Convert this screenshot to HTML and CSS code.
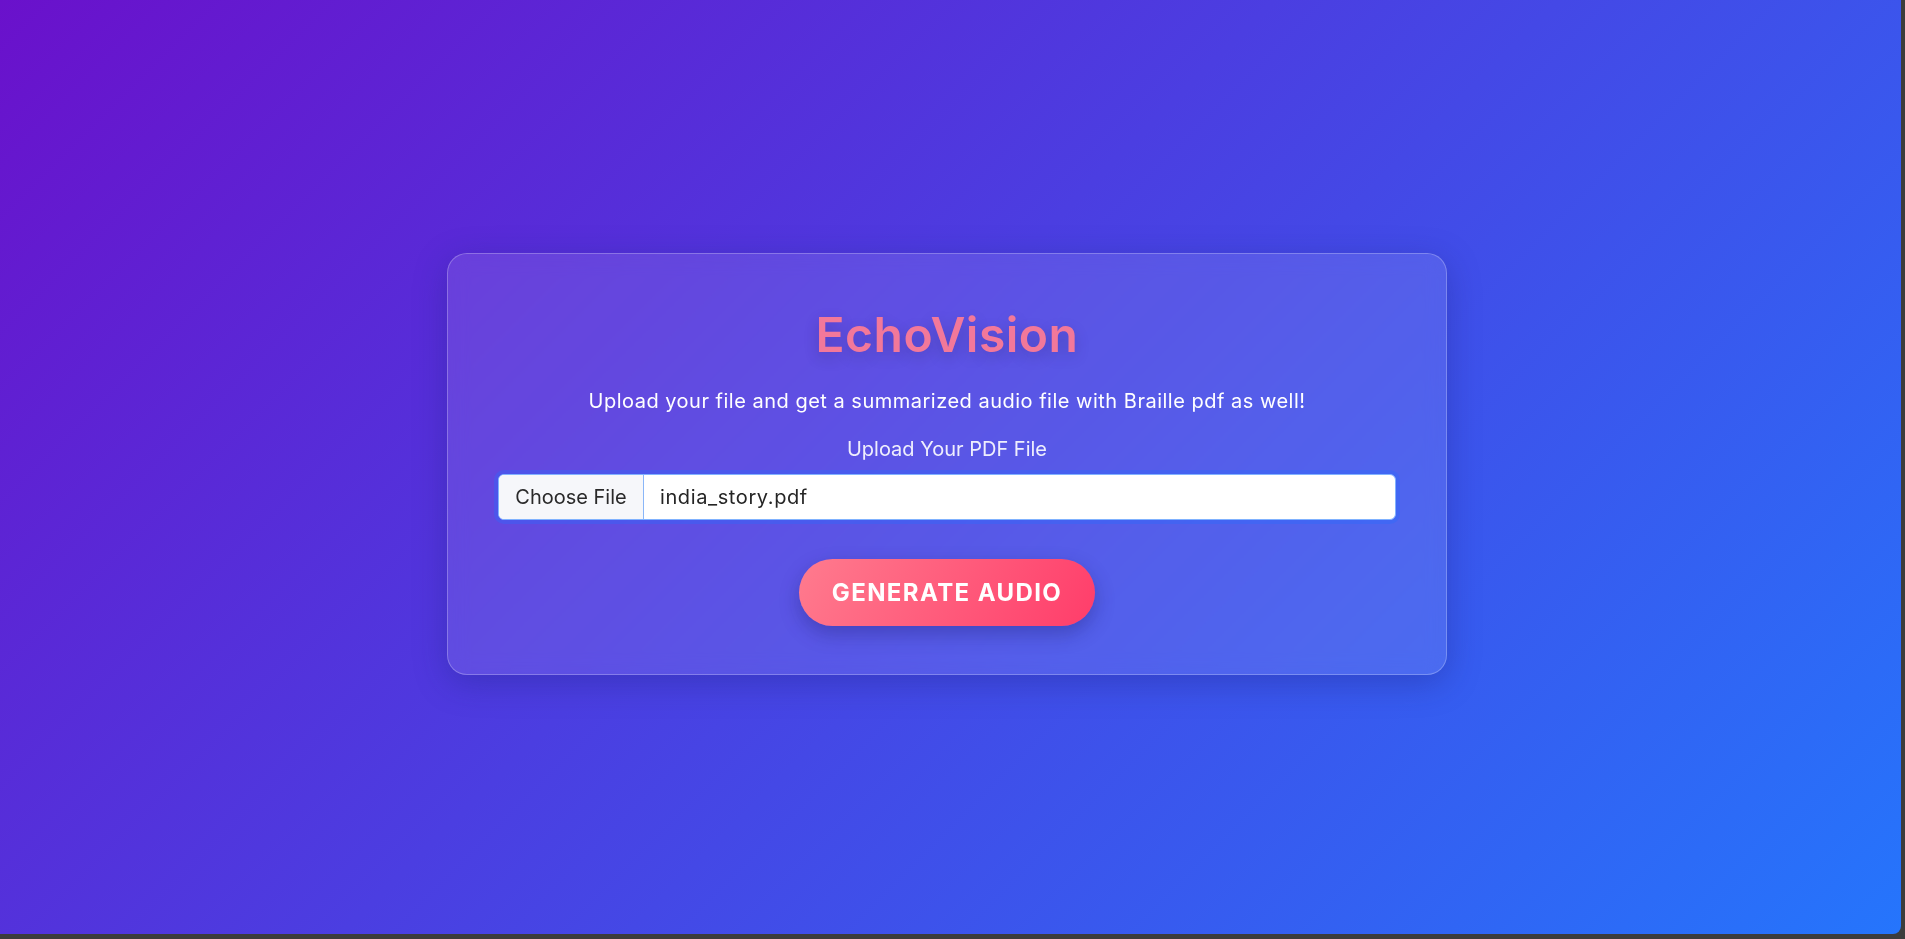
FILE: index.html
```html
<!DOCTYPE html>
<html lang="en">
<head>
<meta charset="utf-8">
<title>EchoVision</title>
<link rel="stylesheet" href="styles.css">
</head>
<body>
<main class="page">
  <section class="card">
    <h1 class="title">EchoVision</h1>
    <p class="subtitle">Upload your file and get a summarized audio file with Braille pdf as well!</p>
    <label class="label" for="pdf">Upload Your PDF File</label>
    <div class="file-input" id="pdf">
      <span class="file-btn">Choose File</span>
      <span class="file-name">india_story.pdf</span>
    </div>
    <button class="generate" type="button">Generate Audio</button>
  </section>
</main>
</body>
</html>
```
FILE: styles.css
```css
html, body {
  margin: 0;
  padding: 0;
  background: #3c3c3c;
  height: 100%;
  overflow: hidden;
}

.page {
  box-sizing: border-box;
  width: calc(100% - 4px);
  height: calc(100% - 5px);
  border-bottom-right-radius: 8px;
  background: linear-gradient(135deg, #6a11cb 0%, #2575fc 100%);
  display: flex;
  align-items: center;
  justify-content: center;
  padding-right: 7px;
  padding-bottom: 6px;
  font-family: "Inter", "Open Sans", "Liberation Sans", sans-serif;
}

.card {
  box-sizing: border-box;
  width: 1000px;
  padding: 52px 50px 48px;
  border-radius: 20px;
  background: rgba(255, 255, 255, 0.1);
  border: 1px solid rgba(255, 255, 255, 0.25);
  box-shadow: 0 8px 32px rgba(31, 38, 135, 0.37);
  backdrop-filter: blur(10px);
  display: flex;
  flex-direction: column;
  align-items: center;
  text-align: center;
}

.title {
  margin: 0 0 22px;
  font-size: 48px;
  line-height: 57.6px;
  font-weight: 600;
  color: #f2789a;
  text-shadow: 0 5px 15px rgba(0, 0, 0, 0.18);
  letter-spacing: 0.5px;
}

.subtitle {
  margin: 0 0 18px;
  font-size: 20px;
  line-height: 30px;
  letter-spacing: 0.5px;
  color: #ffffff;
}

.label {
  margin: 0 0 10px;
  font-size: 20px;
  line-height: 30px;
  color: rgba(255, 255, 255, 0.9);
}

.file-input {
  box-sizing: border-box;
  align-self: stretch;
  height: 46px;
  display: flex;
  align-items: stretch;
  background: #ffffff;
  border: 1.5px solid #80b2ff;
  border-radius: 6px;
  box-shadow: 0 0 0 4px rgba(40, 110, 255, 0.35);
  overflow: hidden;
  font-size: 20px;
  color: #252525;
  text-align: left;
}

.file-btn {
  display: flex;
  align-items: center;
  width: 144px;
  justify-content: center;
  background: #f6f7fa;
  border-right: 1px solid #8ab6f8;
  color: #2a2a2a;
}

.file-name {
  display: flex;
  align-items: center;
  padding-left: 16px;
  letter-spacing: 0.6px;
}

.generate {
  margin-top: 39px;
  height: 67px;
  padding: 0 33px;
  border: none;
  border-radius: 40px;
  background: linear-gradient(120deg, #ff7b8e 0%, #ff3d6a 100%);
  box-shadow: 0 8px 20px rgba(20, 20, 90, 0.3);
  color: #ffffff;
  font-family: inherit;
  font-size: 24px;
  font-weight: 700;
  letter-spacing: 1.4px;
  text-transform: uppercase;
  cursor: pointer;
}
```
